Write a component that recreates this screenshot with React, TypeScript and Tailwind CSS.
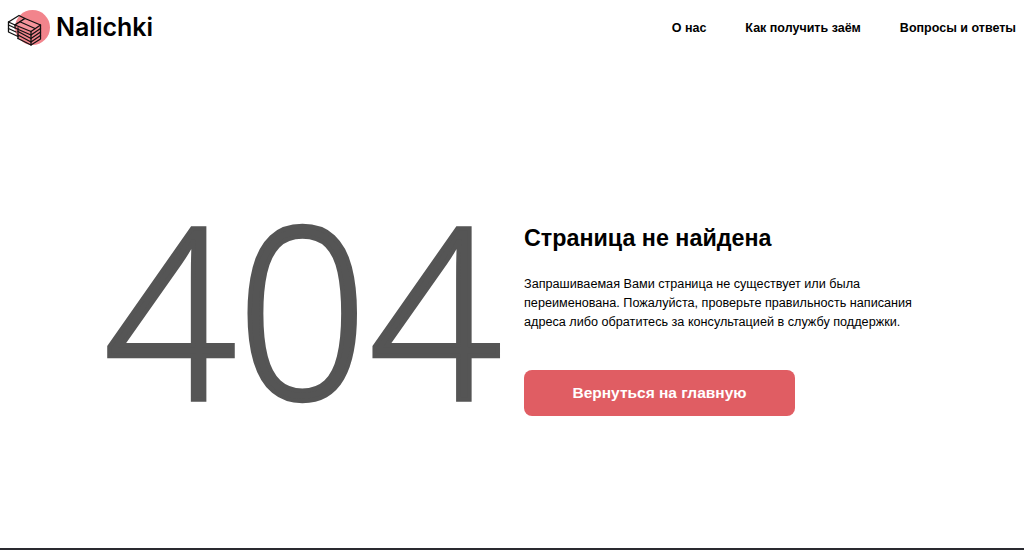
function Logo() {
  return (
    <div className="relative h-[36px] w-[50px]">
      <div className="absolute left-[15px] top-0 h-[35px] w-[35px] rounded-full bg-[#f2848c]" />
      <svg className="absolute left-0 top-0" width="50" height="36" viewBox="0 0 50 36" fill="none" stroke="#111" strokeWidth="1.3" strokeLinejoin="round" strokeLinecap="round">
        {/* left stack of notes */}
        <path d="M8.5 12 L19 5.5 L25 8.5 L15 15 Z" />
        <path d="M8.5 12 V15 L15 18" />
        <path d="M8.5 15 V18.5 L16 22" />
        <path d="M8.5 18.5 V22 L18 26.5" />
        {/* front stack */}
        <path d="M15 15 L25 8.5 L40.5 15 L31 21.5 Z" fill="#f4949b" />
        <path d="M15 15 V18 L31 25 L40.5 18.5 V15" />
        <path d="M20.5 12 L35 18.5" />
        <path d="M18 21.5 L31 28.5 L40.5 22 V18.5" />
        <path d="M18 25 L31 32 L40.5 25.5 V22" />
        <path d="M18 28.5 L31 35 L40.5 29 V25.5" />
        <path d="M18 18 V28.5" />
        <path d="M31 21.5 V35" />
      </svg>
    </div>
  );
}

export default function App() {
  return (
    <div className="flex h-[550px] flex-col overflow-hidden bg-white font-['Liberation_Sans',sans-serif] text-black">
      <header className="flex h-[56px] items-center justify-between pr-[8px]">
        <div className="flex items-center">
          <Logo />
          <span className="ml-[6px] font-['Inter',sans-serif] text-[25px] font-semibold">Nalichki</span>
        </div>
        <nav className="flex items-center gap-[39px] text-[12.5px] font-bold">
          <a>О нас</a>
          <a>Как получить заём</a>
          <a>Вопросы и ответы</a>
        </nav>
      </header>
      <main className="flex flex-1 items-center pl-[82px] pt-[10px]">
        <div className="w-[442px] scale-x-[0.97] text-center font-['Open_Sans',sans-serif] text-[238px] font-light leading-none tracking-[1px] whitespace-nowrap text-[#555] [-webkit-text-stroke:4.5px_#555]">
          404
        </div>
        <div className="pt-[26px]">
          <h1 className="text-[23.3px] font-bold leading-[28px]">Страница не найдена</h1>
          <p className="mt-[23px] w-[400px] text-[12.65px] leading-[19px]">
            Запрашиваемая Вами страница не существует или была переименована. Пожалуйста, проверьте правильность написания адреса либо обратитесь за консультацией в службу поддержки.
          </p>
          <button className="mt-[38px] h-[46px] w-[271px] rounded-[8px] bg-[#e05d63] text-[15.5px] font-bold text-white">
            Вернуться на главную
          </button>
        </div>
      </main>
      <div className="h-[2px] bg-[#2a2a30]" />
    </div>
  );
}
